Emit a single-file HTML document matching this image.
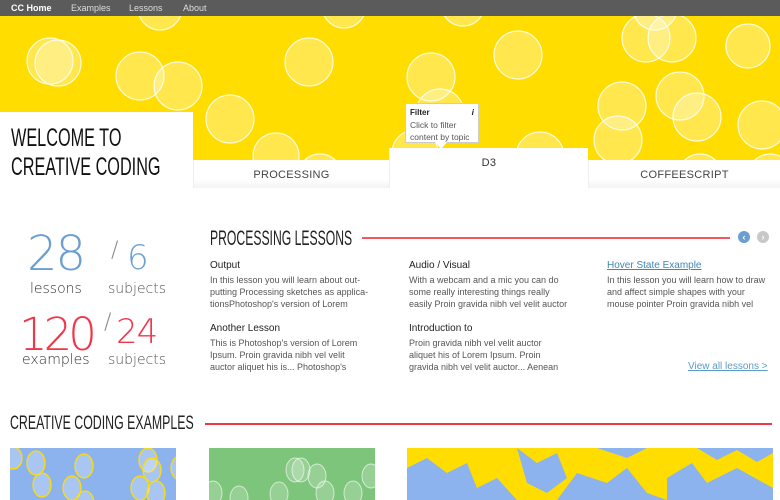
<!DOCTYPE html>
<html><head><meta charset="utf-8"><style>
*{margin:0;padding:0;box-sizing:border-box}
body{width:780px;height:500px;overflow:hidden;background:#fff;font-family:"Liberation Sans",sans-serif;position:relative}
.abs{position:absolute}
.nav{left:0;top:0;width:780px;height:16px;background:#5b5b5b;color:#ddd;font-size:9px;line-height:16px}
.nav span{position:absolute;top:0}
.hero{left:0;top:16px;width:780px;height:172px;background:#ffdd00;overflow:hidden}
.cond{display:inline-block;transform-origin:0 0;white-space:nowrap;color:#222}
.tab{background:#fff;color:#444;font-size:11px;text-align:center;letter-spacing:.3px;border-left:1px solid #eee;background:linear-gradient(#fff 70%,#f3f3f3)}
.h{font-size:10px;color:#222}
.p{font-size:9px;color:#555;line-height:12px}
.stat{font-weight:300;font-family:"DejaVu Sans","Liberation Sans",sans-serif}
</style></head><body>
<div class="abs nav"><span style="left:11px;color:#fff;font-weight:bold">CC Home</span><span style="left:71px">Examples</span><span style="left:129px">Lessons</span><span style="left:183px">About</span></div>
<div class="abs hero"><svg width="780" height="172">
<g fill="rgba(255,255,255,.3)" stroke="rgba(255,255,255,.85)" stroke-width="1.2">
<circle cx="50" cy="45" r="23"/><circle cx="58" cy="47" r="23"/><circle cx="140" cy="60" r="24"/><circle cx="178" cy="70" r="24"/>
<circle cx="160" cy="-8" r="22"/><circle cx="309" cy="46" r="24"/><circle cx="344" cy="-10" r="22"/><circle cx="431" cy="61" r="24"/>
<circle cx="463" cy="-12" r="22"/><circle cx="518" cy="39" r="24"/><circle cx="646" cy="22" r="24"/><circle cx="672" cy="22" r="24"/>
<circle cx="622" cy="90" r="24"/><circle cx="680" cy="80" r="24"/><circle cx="697" cy="101" r="24"/><circle cx="762" cy="109" r="24"/>
<circle cx="230" cy="103" r="24"/><circle cx="276" cy="140" r="23"/><circle cx="440" cy="97" r="24"/><circle cx="415" cy="137" r="23"/>
<circle cx="618" cy="124" r="24"/><circle cx="700" cy="160" r="22"/><circle cx="770" cy="160" r="22"/><circle cx="120" cy="140" r="22"/>
<circle cx="540" cy="140" r="24"/><circle cx="320" cy="160" r="22"/><circle cx="655" cy="-8" r="22"/><circle cx="748" cy="30" r="22"/>
</g></svg></div>
<div class="abs" style="left:0;top:112px;width:193px;height:76px;background:#fff"></div>
<div class="abs" style="left:11px;top:124px;font-size:25px;line-height:29px"><span class="cond" style="color:#111;transform:scaleX(.65)">WELCOME TO<br>CREATIVE CODING</span></div>
<div class="abs tab" style="left:193px;top:160px;width:196px;height:28px;line-height:30px">PROCESSING</div>
<div class="abs tab" style="left:389px;top:148px;width:199px;height:40px;line-height:30px;background:#fff;color:#333">D3</div>
<div class="abs tab" style="left:588px;top:160px;width:192px;height:28px;line-height:30px">COFFEESCRIPT</div>
<div class="abs" style="left:405px;top:103px;width:74px;height:40px;background:#fff;border:1px solid #ccc;padding:2px 4px;font-size:8.5px;line-height:12px;color:#555"><b style="color:#222;font-size:8px">Filter</b><i style="position:absolute;right:4px;top:2px;color:#222;font-weight:bold">i</i><br>Click to filter<br>content by topic</div>
<div class="abs" style="left:435px;top:142px;width:0;height:0;border-left:6px solid transparent;border-right:6px solid transparent;border-top:7px solid #fff"></div>

<div class="abs stat" style="left:27px;top:226px;font-size:48px;color:#6b9fd1;letter-spacing:-2px">28</div>
<div class="abs stat" style="left:30px;top:281px;font-size:14px;color:#333">lessons</div>
<div class="abs stat" style="left:111px;top:238px;font-size:22px;color:#888">/</div>
<div class="abs stat" style="left:127px;top:238px;font-size:34px;color:#6b9fd1">6</div>
<div class="abs stat" style="left:108px;top:281px;font-size:14px;color:#555">subjects</div>
<div class="abs stat" style="left:19px;top:308px;font-size:45px;color:#f0374a;letter-spacing:-4px">120</div>
<div class="abs stat" style="left:22px;top:352px;font-size:14px;color:#333">examples</div>
<div class="abs stat" style="left:104px;top:310px;font-size:22px;color:#888">/</div>
<div class="abs stat" style="left:116px;top:312px;font-size:34px;color:#f0374a;letter-spacing:-1px">24</div>
<div class="abs stat" style="left:108px;top:352px;font-size:14px;color:#555">subjects</div>

<div class="abs" style="left:210px;top:227px;font-size:21px"><span class="cond" style="transform:scaleX(.58)">PROCESSING LESSONS</span></div>
<div class="abs" style="left:362px;top:237px;width:368px;height:1.5px;background:#f0575f"></div>
<div class="abs" style="left:738px;top:231px;width:12px;height:12px;border-radius:50%;background:#6b9fd1;color:#fff;font-size:9px;line-height:12px;text-align:center;font-weight:bold">‹</div>
<div class="abs" style="left:757px;top:231px;width:12px;height:12px;border-radius:50%;background:#c8c8c8;color:#fff;font-size:9px;line-height:12px;text-align:center;font-weight:bold">›</div>

<div class="abs" style="left:210px;top:260px;width:195px"><div class="h">Output</div><div class="p" style="margin-top:3px">In this lesson you will learn about out-<br>putting Processing sketches as applica-<br>tionsPhotoshop's version  of Lorem</div></div>
<div class="abs" style="left:210px;top:323px;width:195px"><div class="h">Another Lesson</div><div class="p" style="margin-top:3px">This is Photoshop's version  of Lorem<br>Ipsum. Proin gravida nibh vel velit<br>auctor aliquet his is... Photoshop's</div></div>
<div class="abs" style="left:409px;top:260px;width:198px"><div class="h">Audio / Visual</div><div class="p" style="margin-top:3px">With a webcam and a mic you can do<br>some really interesting things really<br>easily Proin gravida nibh vel velit auctor</div></div>
<div class="abs" style="left:409px;top:323px;width:198px"><div class="h">Introduction to</div><div class="p" style="margin-top:3px">Proin gravida nibh vel velit auctor<br>aliquet his of Lorem Ipsum. Proin<br>gravida nibh vel velit auctor... Aenean</div></div>
<div class="abs" style="left:607px;top:260px;width:175px"><div class="h" style="color:#3d86b5;text-decoration:underline">Hover State Example</div><div class="p" style="margin-top:3px">In this lesson you will learn how to draw<br>and affect simple shapes with your<br>mouse pointer Proin gravida nibh vel</div></div>
<div class="abs" style="left:688px;top:361px;font-size:10px;color:#5a9cc5;text-decoration:underline">View all lessons &gt;</div>

<div class="abs" style="left:10px;top:413px;font-size:19px"><span class="cond" style="transform:scaleX(.65)">CREATIVE CODING EXAMPLES</span></div>
<div class="abs" style="left:205px;top:423px;width:567px;height:1.5px;background:#f0374a"></div>

<div class="abs" style="left:10px;top:448px;width:166px;height:52px;background:#8db3ee;overflow:hidden"><svg width="166" height="52"><g fill="rgba(255,255,255,.25)" stroke="#ffdd00" stroke-width="1.3"><ellipse cx="3" cy="10" rx="9" ry="11"/><ellipse cx="26" cy="15" rx="9" ry="12"/><ellipse cx="32" cy="37" rx="9" ry="12"/><ellipse cx="74" cy="18" rx="9" ry="12"/><ellipse cx="62" cy="40" rx="9" ry="12"/><ellipse cx="138" cy="12" rx="9" ry="12"/><ellipse cx="142" cy="22" rx="9" ry="12"/><ellipse cx="130" cy="40" rx="9" ry="12"/><ellipse cx="146" cy="45" rx="9" ry="12"/><ellipse cx="170" cy="20" rx="9" ry="12"/><ellipse cx="75" cy="55" rx="9" ry="12"/></g></svg></div>
<div class="abs" style="left:209px;top:448px;width:166px;height:52px;background:#7cc57a;overflow:hidden"><svg width="166" height="52"><g fill="rgba(255,255,255,.2)" stroke="rgba(255,255,255,.6)"><ellipse cx="4" cy="45" rx="9" ry="12"/><ellipse cx="86" cy="22" rx="9" ry="12"/><ellipse cx="92" cy="22" rx="9" ry="12"/><ellipse cx="108" cy="28" rx="9" ry="12"/><ellipse cx="116" cy="45" rx="9" ry="12"/><ellipse cx="144" cy="45" rx="9" ry="12"/><ellipse cx="162" cy="28" rx="9" ry="12"/><ellipse cx="70" cy="46" rx="9" ry="12"/><ellipse cx="30" cy="50" rx="9" ry="12"/></g></svg></div>
<div class="abs" style="left:407px;top:448px;width:366px;height:52px;background:#ffdd00;overflow:hidden"><svg width="366" height="52"><g fill="#8db3ee"><path d="M0 20 L20 10 L40 25 L60 15 L70 40 L90 30 L110 52 L0 52Z"/><path d="M110 0 L130 15 L150 5 L160 30 L140 45 L120 35Z"/><path d="M150 52 L170 25 L200 35 L220 20 L240 45 L260 52Z"/><path d="M190 0 L220 10 L240 0Z"/><path d="M260 30 L285 15 L300 35 L330 20 L366 40 L366 52 L260 52Z"/><path d="M290 0 L310 12 L330 2 L350 14 L366 5 L366 0Z"/></g></svg></div>
</body></html>
